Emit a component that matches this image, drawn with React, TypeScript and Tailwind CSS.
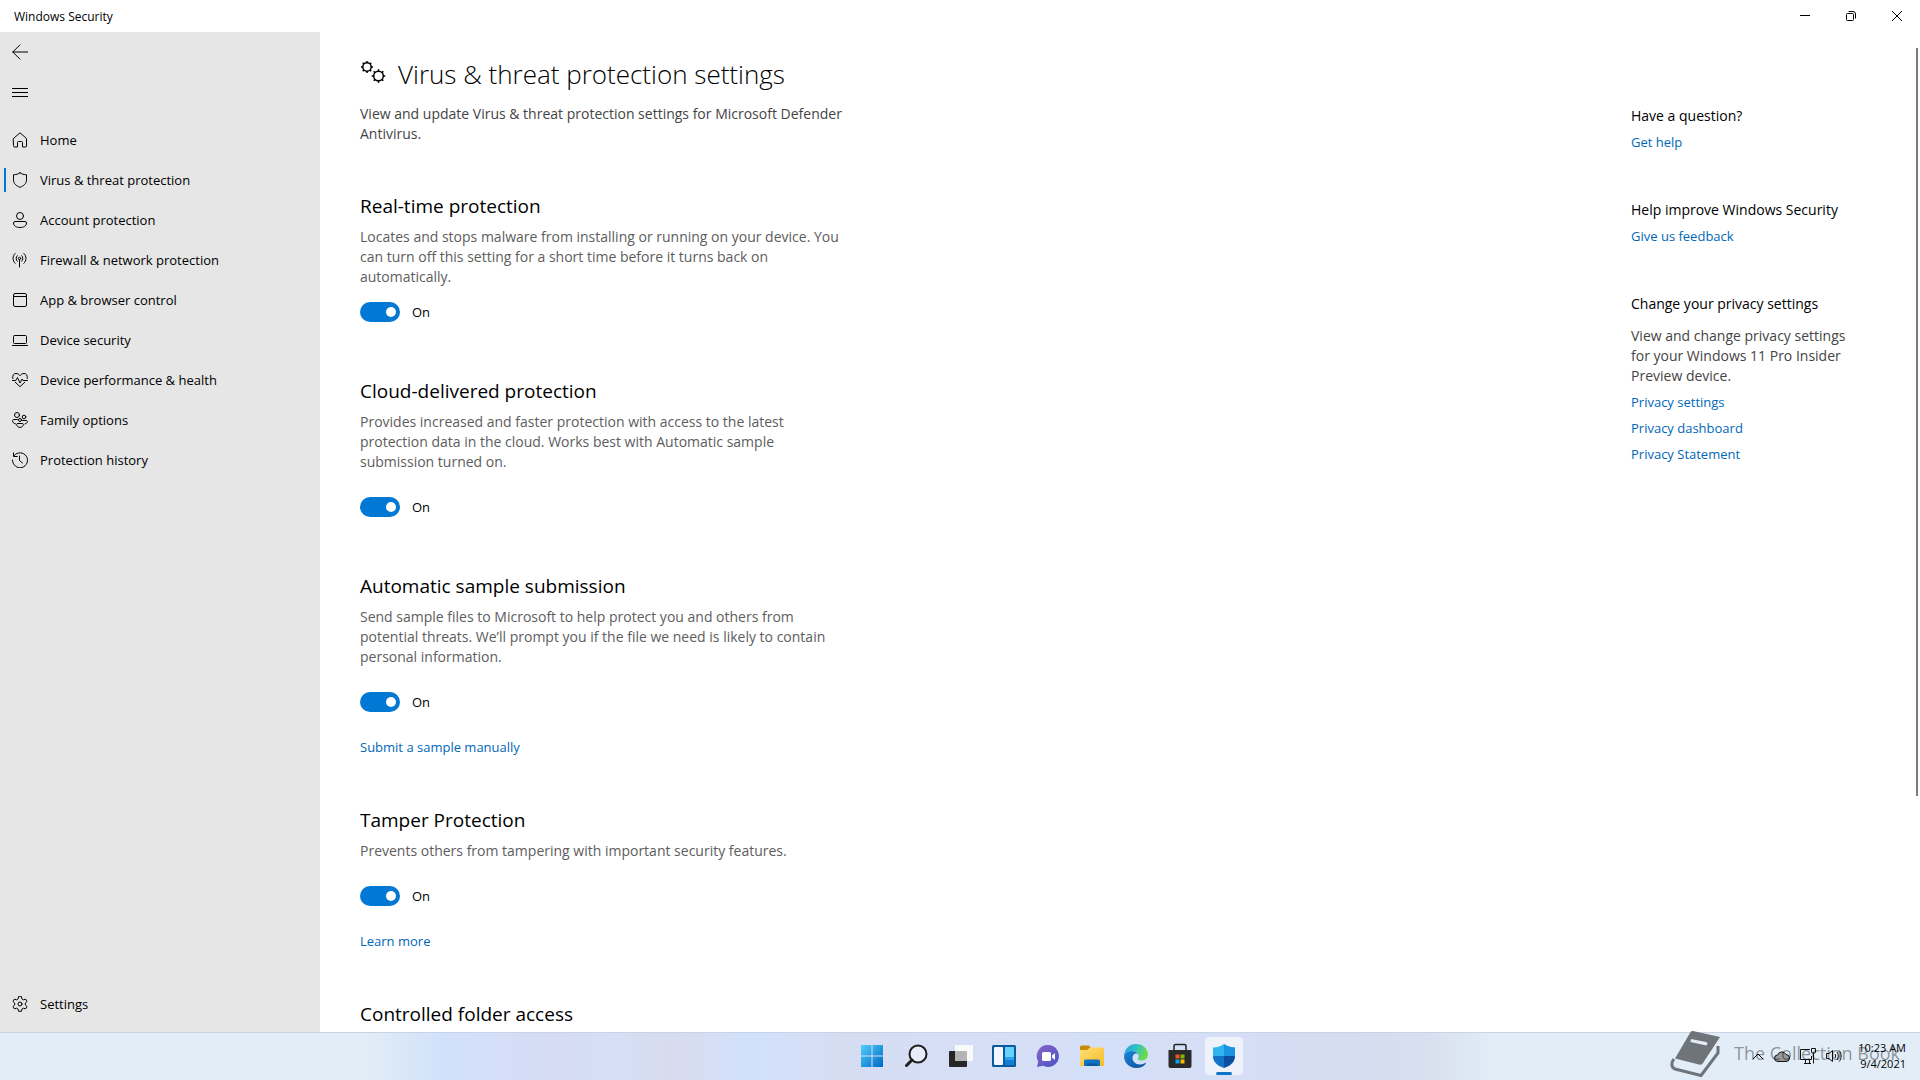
import type { ReactNode } from "react";

type IconProps = { children: ReactNode };

function LineIcon({ children }: IconProps) {
  return (
    <svg
      viewBox="0 0 16 16"
      className="size-4 shrink-0"
      fill="none"
      stroke="currentColor"
      strokeLinecap="round"
      strokeLinejoin="round"
      aria-hidden="true"
    >
      {children}
    </svg>
  );
}

const navItems = [
  {
    label: "Home",
    icon: (
      <path d="M1.5 6.5 8 .8l6.500 5.700v7.500a1 1 0 0 1-1 1H10.500v-4.500a1 1 0 0 0-1-1h-3a1 1 0 0 0-1 1V15H2.500a1 1 0 0 1-1-1z" />
    ),
  },
  {
    label: "Virus & threat protection",
    active: true,
    icon: (
      <path d="M8 .8c1.800 1.300 4 1.900 6.500 2v5c0 3.600-2.400 6-6.500 7.500C3.900 13.800 1.500 11.400 1.500 7.800v-5C4 2.700 6.200 2.100 8 .8z" />
    ),
  },
  {
    label: "Account protection",
    icon: (
      <>
        <circle cx="8" cy="4" r="3.500" />
        <path d="M3 9.500h10A1.500 1.500 0 0 1 14.500 11c0 3-3 4.500-6.500 4.500S1.500 14 1.500 11A1.500 1.500 0 0 1 3 9.500z" />
      </>
    ),
  },
  {
    label: "Firewall & network protection",
    icon: (
      <>
        <circle cx="7.500" cy="6.500" r="1.200" />
        <path d="M7.500 7.700V15M5.200 9.300a4 4 0 0 1 0-5.600M9.800 9.300a4 4 0 0 0 0-5.600M3.100 11.300c-2.800-2.800-2.800-7.200 0-9.800M11.900 11.300c2.800-2.800 2.800-7.200 0-9.800" />
      </>
    ),
  },
  {
    label: "App & browser control",
    icon: (
      <>
        <rect x="1.500" y="1.500" width="13" height="13" rx="1.500" />
        <path d="M1.500 4.500h13" />
      </>
    ),
  },
  {
    label: "Device security",
    icon: (
      <>
        <rect x="1.500" y="3.500" width="13" height="8" rx="1" />
        <path d="M.5 13.500h15" />
      </>
    ),
  },
  {
    label: "Device performance & health",
    icon: (
      <>
        <path d="M.8 6.500C0 3.500 1.800 1.500 4 1.500c1.800 0 3 .8 4 2.200 1-1.400 2.200-2.200 4-2.200 2.200 0 4 2 3.200 5M3.200 10.200 8 14.700l4.800-4.500" />
        <path d="M.5 8.500h3.300l1.700-3 2.500 5.500 2-4 1 1.500h4.500" />
      </>
    ),
  },
  {
    label: "Family options",
    icon: (
      <>
        <circle cx="5" cy="3" r="2.500" />
        <circle cx="12" cy="5" r="1.800" />
        <circle cx="8" cy="8" r="1.500" />
        <path d="M5.500 7.500h-4c-1 0-1 1.500-.6 2.500.5 1.200 1.500 1.700 2.600 1.900M10.500 8.500h4c1 0 1 1.200.6 2-.4.800-1.200 1.300-2.100 1.500M5.500 11.500h5c1 0 1 1.200.6 2-.6 1.300-1.800 1.900-3.100 1.900s-2.500-.6-3.100-1.900c-.4-.8-.4-2 .6-2z" />
      </>
    ),
  },
  {
    label: "Protection history",
    icon: (
      <>
        <path d="M2.200 3.500A7.500 7.500 0 1 1 .5 8M1.500.8v3.700h3.800" />
        <path d="M7.500 4v4.500l3 2.500" />
      </>
    ),
  },
];

const sections = [
  {
    id: "real-time",
    title: "Real-time protection",
    text: "Locates and stops malware from installing or running on your device. You can turn off this setting for a short time before it turns back on automatically.",
    compact: true,
  },
  {
    id: "cloud",
    title: "Cloud-delivered protection",
    text: "Provides increased and faster protection with access to the latest protection data in the cloud. Works best with Automatic sample submission turned on.",
  },
  {
    id: "sample",
    title: "Automatic sample submission",
    text: "Send sample files to Microsoft to help protect you and others from potential threats. We’ll prompt you if the file we need is likely to contain personal information.",
    link: "Submit a sample manually",
  },
  {
    id: "tamper",
    title: "Tamper Protection",
    text: "Prevents others from tampering with important security features.",
    link: "Learn more",
  },
];

function TitleBar() {
  return (
    <header className="flex h-8 shrink-0 items-center justify-between bg-white pl-3.5">
      <p className="pt-0.5 text-xs">Windows Security</p>
      <div className="flex">
        <button aria-label="Minimize" className="flex h-8 w-[46px] items-center justify-center">
          <svg viewBox="0 0 10 10" className="size-2.5" stroke="currentColor">
            <path d="M0 4.500h10" />
          </svg>
        </button>
        <button aria-label="Restore" className="flex h-8 w-[46px] items-center justify-center">
          <svg viewBox="0 0 10 10" className="size-2.5" fill="none" stroke="currentColor">
            <rect x=".5" y="2.500" width="7" height="7" rx="1" />
            <path d="M2.500.5H7A2.500 2.500 0 0 1 9.500 3v4.500" />
          </svg>
        </button>
        <button aria-label="Close" className="flex h-8 w-[46px] items-center justify-center">
          <svg viewBox="0 0 10 10" className="size-2.5" stroke="currentColor">
            <path d="m0 0 10 10M10 0 0 10" />
          </svg>
        </button>
      </div>
    </header>
  );
}

function Sidebar() {
  return (
    <aside className="flex w-80 shrink-0 flex-col bg-[#e6e6e6] pb-2">
      <button aria-label="Back" className="flex h-10 items-center px-3">
        <LineIcon>
          <path d="M16 8H.8M8 .8.8 8 8 15.200" />
        </LineIcon>
      </button>
      <button aria-label="Open navigation" className="flex h-10 items-center px-3">
        <LineIcon>
          <path d="M0 4.500h16M0 8.500h16M0 12.500h16" />
        </LineIcon>
      </button>
      <nav className="flex grow flex-col pt-2 text-[13px]">
        {navItems.map((item) => (
          <a key={item.label} href="#" className="flex h-10 items-center pl-1">
            <span
              className={item.active ? "h-6 w-0.5 bg-[#0078d4]" : "h-6 w-0.5"}
            />
            <span className="flex items-center gap-3 pl-1.5">
              <LineIcon>{item.icon}</LineIcon>
              <span className="pt-0.5">{item.label}</span>
            </span>
          </a>
        ))}
        <a href="#" className="mt-auto flex h-10 items-center gap-3 px-3">
          <LineIcon>
            <circle cx="8" cy="8" r="2" />
            <path d="m6.600.7-.5 2.200-1.500.9-2.200-.7L1 5.500l1.700 1.600v1.800L1 10.500l1.400 2.400 2.200-.7 1.500.9.500 2.200h2.800l.5-2.200 1.500-.9 2.200.7L15 10.500l-1.700-1.600V7.100L15 5.500l-1.400-2.400-2.200.7-1.500-.9-.5-2.200z" />
          </LineIcon>
          <span className="pt-0.5">Settings</span>
        </a>
      </nav>
    </aside>
  );
}

function Gears() {
  const teeth = [0, 45, 90, 135, 180, 225, 270, 315];
  return (
    <svg
      viewBox="0 0 26 26"
      className="size-[26px] shrink-0"
      fill="none"
      stroke="currentColor"
      strokeWidth="1.500"
      aria-hidden="true"
    >
      <circle cx="7" cy="7" r="4.200" />
      {teeth.map((angle) => (
        <path key={angle} d="M7 2.800V1" transform={`rotate(${angle} 7 7)`} />
      ))}
      <circle cx="18.500" cy="16" r="4.800" />
      {teeth.map((angle) => (
        <path key={angle} d="M18.500 11.200v-2" transform={`rotate(${angle} 18.500 16)`} />
      ))}
    </svg>
  );
}

function Toggle({ id }: { id: string }) {
  return (
    <div className="flex h-5 items-center gap-3">
      <input
        id={id}
        type="checkbox"
        role="switch"
        defaultChecked
        className="flex h-5 w-10 appearance-none items-center rounded-full bg-gray-400 px-1 before:block before:size-2.5 before:rounded-full before:bg-white checked:justify-end checked:bg-[#0078d4]"
      />
      <label htmlFor={id} className="pt-0.5 text-[13px]">
        On
      </label>
    </div>
  );
}

function Content() {
  return (
    <main className="flex grow justify-between overflow-hidden bg-white pl-10">
      <div className="w-[490px] pt-5">
        <h1 className="flex items-center gap-3 text-[26px] leading-10 font-light">
          <Gears />
          <span className="pt-0.5">Virus &amp; threat protection settings</span>
        </h1>
        <p className="mt-2.5 text-sm leading-5 text-[#444]">
          View and update Virus &amp; threat protection settings for Microsoft
          Defender Antivirus.
        </p>
        <div className="mt-12 flex flex-col">
          {sections.map((section) => (
            <section key={section.id} className="pb-[55px]">
              <h2 className="text-[19px] leading-7">{section.title}</h2>
              <p className="mt-[7px] text-sm leading-5 text-[#5d5d5d]">
                {section.text}
              </p>
              <div className={section.compact ? "mt-[15px]" : "mt-[25px]"}>
                <Toggle id={section.id} />
              </div>
              {section.link && (
                <a href="#" className="mt-[25px] -mb-1.5 block text-[13px] leading-5 text-[#0067b8]">
                  {section.link}
                </a>
              )}
            </section>
          ))}
          <h2 className="text-[19px] leading-7">Controlled folder access</h2>
        </div>
      </div>

      <div className="flex pt-4">
        <aside className="flex w-[285px] flex-col gap-12 pt-14 text-sm leading-5">
          <section>
            <h3 className="pt-0.5">Have a question?</h3>
            <HelpLink>Get help</HelpLink>
          </section>
          <section>
            <h3>Help improve Windows Security</h3>
            <HelpLink>Give us feedback</HelpLink>
          </section>
          <section>
            <h3>Change your privacy settings</h3>
            <p className="mt-3 w-[230px] text-[#444]">
              View and change privacy settings for your Windows 11 Pro Insider
              Preview device.
            </p>
            <HelpLink>Privacy settings</HelpLink>
            <HelpLink>Privacy dashboard</HelpLink>
            <HelpLink>Privacy Statement</HelpLink>
          </section>
        </aside>
        <div className="mr-0.5 h-[76%] w-0.5 bg-[#7a7a7a]" />
      </div>
    </main>
  );
}

function HelpLink({ children }: { children: ReactNode }) {
  return (
    <a href="#" className="mt-1.5 block text-[13px] leading-5 text-[#0067b8]">
      {children}
    </a>
  );
}

const apps = [
  {
    name: "Start",
    icon: (
      <>
        <defs>
          <linearGradient id="start" x1="0" y1="0" x2="1" y2="1">
            <stop offset="0" stopColor="#4fd0fb" />
            <stop offset="1" stopColor="#0067c5" />
          </linearGradient>
        </defs>
        <path
          fill="url(#start)"
          d="M1 1h10.500v10.500H1zM12.500 1H23v10.500H12.500zM1 12.500h10.500V23H1zM12.500 12.500H23V23H12.500z"
        />
      </>
    ),
  },
  {
    name: "Search",
    icon: (
      <>
        <circle cx="14" cy="10" r="8.500" fill="#e6ecf8" stroke="#1d1d1d" strokeWidth="2" />
        <path d="m8 16-5.500 5.500" stroke="#1d1d1d" strokeWidth="3" strokeLinecap="round" />
      </>
    ),
  },
  {
    name: "Task View",
    icon: (
      <>
        <rect x="1" y="7" width="18" height="16" rx="1" fill="#262626" />
        <rect x="7" y="1" width="18" height="16" rx="1" fill="#fafafa" />
        <path d="M7 7h12v10H7z" fill="#b4b4b4" />
      </>
    ),
  },
  {
    name: "Widgets",
    icon: (
      <>
        <rect x="0" y="1" width="24" height="22" rx="1.500" fill="#0a5a9e" />
        <rect x="2" y="3" width="9" height="18" rx="1" fill="#f3f6fa" />
        <path d="M13 3h9v10h-9z" fill="#69d2fb" />
        <path d="M13 13h9v3h-9z" fill="#2aa3ec" />
        <path d="M13 16h9v5h-9z" fill="#0f7fd6" />
      </>
    ),
  },
  {
    name: "Chat",
    icon: (
      <>
        <defs>
          <linearGradient id="chat" x1="0" y1="0" x2="1" y2="1">
            <stop offset="0" stopColor="#8a63c4" />
            <stop offset="1" stopColor="#4655c8" />
          </linearGradient>
        </defs>
        <path fill="url(#chat)" d="M12 1a11 11 0 1 1-5 20.800L1 23l1.200-5.500A11 11 0 0 1 12 1z" />
        <rect x="6" y="8" width="9" height="9" rx="1.500" fill="#fff" />
        <path fill="#fff" d="m16 11.500 3-2.500v7l-3-2.500z" />
      </>
    ),
  },
  {
    name: "File Explorer",
    icon: (
      <>
        <defs>
          <linearGradient id="folder" x1="0" y1="0" x2="1" y2="1">
            <stop offset="0" stopColor="#ffdf77" />
            <stop offset="1" stopColor="#f6bd27" />
          </linearGradient>
        </defs>
        <path d="M0 3a1.500 1.500 0 0 1 1.500-1.500H9L11 4v3H0z" fill="#c88a0a" />
        <path d="M0 6h7l3-2.500h13a1 1 0 0 1 1 1V22H0z" fill="url(#folder)" />
        <path d="M4 22v-5a1.500 1.500 0 0 1 1.500-1.500h13A1.500 1.500 0 0 1 20 17v5z" fill="#0f73c0" />
        <path d="M7 19.500h10V22H7z" fill="#0a5a9e" />
      </>
    ),
  },
  {
    name: "Microsoft Edge",
    icon: (
      <>
        <defs>
          <linearGradient id="edgeTop" x1="0" y1="0" x2="1" y2=".3">
            <stop offset="0" stopColor="#1e9fe0" />
            <stop offset=".5" stopColor="#2fc0c8" />
            <stop offset="1" stopColor="#6bdc4c" />
          </linearGradient>
          <linearGradient id="edgeLow" x1="0" y1="0" x2="1" y2="1">
            <stop offset="0" stopColor="#1a86d8" />
            <stop offset="1" stopColor="#0c4d9c" />
          </linearGradient>
        </defs>
        <path
          fill="url(#edgeTop)"
          d="M.1 11C.8 4.800 5.600 0 12 0c7 0 12 5 12 10.200 0 4-3 6.300-6.300 6.300-2.700 0-3.900-.9-3.900-1.700 0-.6.9-1 .9-2.700C14.700 9.500 11.500 7 7.500 7 4 7 1.500 8.500.1 11z"
        />
        <path
          fill="url(#edgeLow)"
          d="M.1 11C1.500 8.500 4.500 7 7.500 7c2.600 0 4.900 1 6.200 2.600C10.500 8.700 8.500 11 8.500 14c0 3.500 3 6.500 7 6.500 2.300 0 4.500-.8 6-1.600.3-.2.700.2.500.5C19.800 22.400 16.300 24 12 24 5.200 24-.5 18.500.1 11z"
        />
      </>
    ),
  },
  {
    name: "Microsoft Store",
    icon: (
      <>
        <path d="M6 6V2A1.500 1.500 0 0 1 7.500.5h9A1.500 1.500 0 0 1 18 2v4" fill="none" stroke="#222" strokeWidth="1.500" />
        <path d="M.5 6h23v16a2 2 0 0 1-2 2h-19a2 2 0 0 1-2-2z" fill="#2a2a2a" />
        <path d="M7.500 10.500h4v4h-4z" fill="#f25022" />
        <path d="M12.500 10.500h4v4h-4z" fill="#7fba00" />
        <path d="M7.500 15.500h4v4h-4z" fill="#00a4ef" />
        <path d="M12.500 15.500h4v4h-4z" fill="#ffb900" />
      </>
    ),
  },
  {
    name: "Windows Security",
    active: true,
    icon: (
      <>
        <path d="M12 0c3 2.200 6.500 3.200 11 3.500V12H1V3.500C5.500 3.200 9 2.200 12 0z" fill="#2fb4f0" />
        <path d="M12 0c3 2.200 6.500 3.200 11 3.500V12H12z" fill="#1a94e0" />
        <path d="M1 12h11v12C5 21.500 1 18 1 12z" fill="#1273c8" />
        <path d="M23 12H12v12c7-2.500 11-6 11-12z" fill="#0c4f9e" />
      </>
    ),
  },
];

function Taskbar() {
  return (
    <footer className="relative flex h-12 shrink-0 items-center justify-center bg-[linear-gradient(90deg,#e1edf7_0%,#e1edf7_19%,#d2e1fb_23%,#d6dcf4_29%,#d5dff6_32%,#d8dbee_35%,#d2e1fb_39%,#d6ddf3_44%,#d4e0f8_58%,#d6ddf3_68%,#d8deee_74%,#e1edf7_78%,#e2edf8_100%)] pl-44 shadow-[inset_0_1px_0_#c9d3e6]">
      <div className="flex">
        {apps.map((app) => (
          <button
            key={app.name}
            aria-label={app.name}
            className="flex h-12 w-11 items-center justify-center"
          >
            <span
              className={
                app.active
                  ? "relative flex size-[38px] items-center justify-center rounded bg-white/60"
                  : "relative flex size-[38px] items-center justify-center"
              }
            >
              <svg viewBox="0 0 24 24" className="size-6 overflow-visible" aria-hidden="true">
                {app.icon}
              </svg>
              {app.active && (
                <span className="absolute bottom-0 h-[3px] w-4 rounded-full bg-[#0f73c8]" />
              )}
            </span>
          </button>
        ))}
      </div>

      <div className="absolute inset-y-0 right-3.5 flex items-center">
        <div className="flex items-center gap-2.5 pr-4">
          <button aria-label="Show hidden icons">
            <svg viewBox="0 0 12 8" className="h-2 w-3" fill="none" stroke="currentColor">
              <path d="m1 7 5-5 5 5" />
            </svg>
          </button>
          <svg viewBox="0 0 16 12" className="h-3 w-4" stroke="#111" aria-hidden="true">
            <path
              d="M4 11.500a3.300 3.300 0 0 1-.3-6.600A4.500 4.500 0 0 1 12 4.500a3.500 3.500 0 0 1 0 7z"
              fill="#9a9a9a"
            />
          </svg>
          <svg viewBox="0 0 16 16" className="size-4" fill="none" stroke="#111" aria-hidden="true">
            <path d="M10 1.500H.5v10h11V8M4 15.500h7M5.500 11.500v4M9.500 11.500v4M11.500.5h4V4a1 1 0 0 1-1 1h-2a1 1 0 0 1-1-1zM13.500 5v10.500" />
          </svg>
          <svg viewBox="0 0 16 14" className="h-3.5 w-4" fill="none" stroke="#111" aria-hidden="true">
            <path d="M.5 4.500H3L6.500 1.500v11L3 9.500H.5zM9 5c.8 1.200.8 2.800 0 4M11 3c1.800 2.300 1.800 5.700 0 8M13.200 1.500c2.600 3.200 2.600 7.800 0 11" />
          </svg>
        </div>
        <div className="text-right text-[11px] leading-4">
          <p>10:23 AM</p>
          <p>9/4/2021</p>
        </div>
      </div>

      {/* watermark laid over the tray */}
      <div className="pointer-events-none absolute -top-px right-5 flex h-12 items-center gap-3.5 text-black/40">
        <svg viewBox="0 0 50 48" className="h-12 w-[50px]" aria-hidden="true">
          <path
            fill="#6f7478"
            fillRule="evenodd"
            d="M23 0 50 6 33 32c-1 1.500-2 2-4 1.500L5 27.500 20 2c1-1.500 1.500-2.200 3-2zM21 8l15 3 1.500 1-1 2.500-16-3.500z"
          />
          <path
            fill="none"
            stroke="#6f7478"
            strokeWidth="3"
            d="M48 15v7L31 44.500 5 38c-4-1.500-4-7-1-10"
          />
        </svg>
        <p className="pb-1 text-lg">The Collection Book</p>
      </div>
    </footer>
  );
}

export default function App() {
  return (
    <div className="flex h-screen flex-col overflow-hidden font-['Open_Sans','Noto_Sans',sans-serif] text-black">
      <TitleBar />
      <div className="flex min-h-0 grow">
        <Sidebar />
        <Content />
      </div>
      <Taskbar />
    </div>
  );
}
